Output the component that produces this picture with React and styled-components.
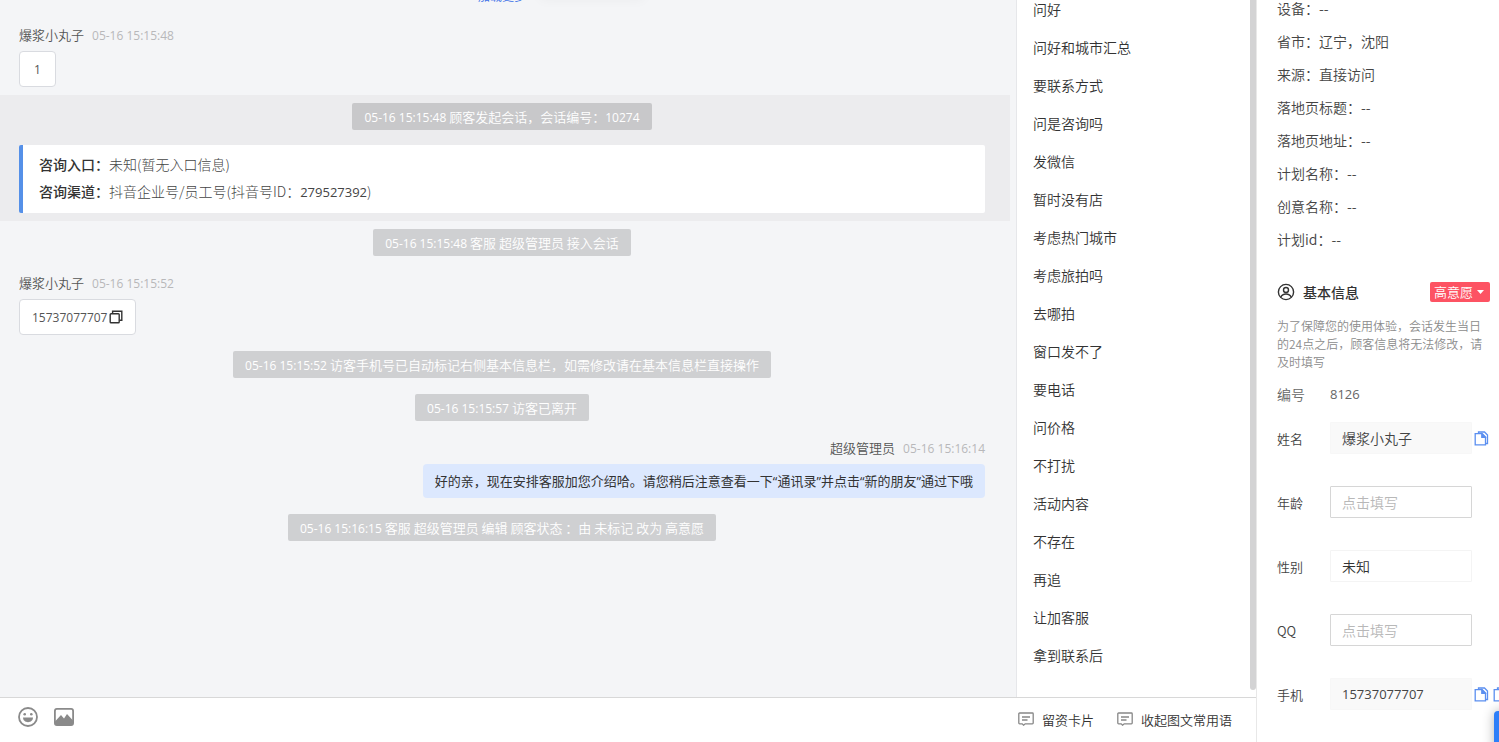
import React, { useState } from 'react';
import styled, { createGlobalStyle } from 'styled-components';

const cjk = '"Noto Sans CJK SC", sans-serif';
const latin = '"Open Sans", "Noto Sans CJK SC", sans-serif';

const GlobalStyle = createGlobalStyle`
  * {
    box-sizing: border-box;
  }
  body {
    margin: 0;
    font-family: ${cjk};
    font-size: 14px;
    font-weight: 350;
    color: #333;
    background: #fff;
  }
  button, input, select {
    font-family: inherit;
    font-weight: inherit;
    color: inherit;
  }
  button {
    border: 0;
    padding: 0;
    background: none;
    cursor: pointer;
  }
  svg {
    display: block;
    flex: none;
  }
`;

const Page = styled.div`
  position: relative;
  display: flex;
  height: 100vh;
  overflow: hidden;
`;

const Main = styled.main`
  flex: 1;
  min-width: 0;
  display: flex;
  flex-direction: column;
`;

const Workspace = styled.div`
  flex: 1;
  min-height: 0;
  display: flex;
`;

const Chat = styled.section`
  position: relative;
  flex: 1;
  min-width: 0;
  overflow: hidden;
  padding-right: 6px;
  background: #f4f5f7;
`;

const ToastShadow = styled.div`
  position: absolute;
  top: -20px;
  left: 540px;
  width: 104px;
  height: 18px;
  box-shadow: 0 2px 12px rgba(0, 0, 0, 0.04);
`;

const ChatLog = styled.div`
  display: flex;
  flex-direction: column;
  gap: 16px;
  margin-top: -14px;
`;

const Row = styled.div`
  display: flex;
  flex-direction: column;
  align-items: ${({ align }) => align || 'center'};
  padding: 0 25px 0 19px;
`;

const LoadMore = styled.button`
  height: 22px;
  font-size: 12px;
  line-height: 20px;
  padding-bottom: 2px;
  color: #3a6fe8;
`;

const Notice = styled.div`
  padding: 0 12px;
  border-radius: 2px;
  background: rgba(0, 0, 0, 0.15);
  font-size: 13px;
  line-height: 27px;
  height: 27px;
  color: #fff;
`;

const Num = styled.span`
  font-family: ${latin};
  font-size: ${({ size }) => size || 12}px;
  font-weight: 400;
`;

const MessageHead = styled.div`
  display: flex;
  align-items: baseline;
  gap: 8px;
  height: 22px;
  margin-bottom: 5px;
  font-size: 13px;
  line-height: 22px;
  color: #555;
`;

const Time = styled.time`
  font-family: ${latin};
  font-size: 12px;
  font-weight: 400;
  color: #b8b8ba;
`;

const Bubble = styled.div`
  display: flex;
  align-items: center;
  justify-content: center;
  gap: 2px;
  min-width: 37px;
  height: 36px;
  padding: 0 12px;
  border: 1px solid #d9dbe0;
  border-radius: 4px;
  background: #fff;
  color: #555;
`;

const OwnBubble = styled.div`
  padding: 0 12px;
  border-radius: 4px;
  background: #dce8fe;
  font-family: ${latin};
  font-size: 13px;
  font-weight: 400;
  line-height: 34px;
  height: 34px;
`;

const Session = styled.div`
  margin: -8px 0;
  padding: 8px 0;
  background: #ececee;
`;

const SourceCard = styled.dl`
  align-self: stretch;
  margin: 15px 0 0;
  padding: 6px 16px 8px;
  border-left: 4px solid #5590e8;
  border-radius: 2px;
  background: #fff;
  line-height: 27px;
`;

const SourceLine = styled.div`
  display: flex;
  height: 27px;

  dt {
    font-weight: 500;
  }
  dd {
    margin: 0;
    font-weight: 300;
    color: #444;
  }
`;

const Phrases = styled.section`
  flex: none;
  width: 240px;
  display: flex;
  border-left: 1px solid #e6e7ea;
  overflow: hidden;
`;

const PhraseList = styled.div`
  flex: 1;
  display: flex;
  flex-direction: column;
  gap: 20px;
`;

const Phrase = styled.button`
  flex: none;
  height: 18px;
  padding: 0 16px;
  font-size: 14px;
  line-height: 18px;
  text-align: left;
`;

const Scrollbar = styled.div`
  width: 6px;
  margin-bottom: 7px;
  border-radius: 0 0 3px 3px;
  background: #d3d3d4;
`;

const Composer = styled.footer`
  flex: none;
  height: 45px;
  display: flex;
  align-items: center;
  justify-content: space-between;
  padding: 0 24px 0 18px;
  border-top: 1px solid #d8d8d8;
`;

const Tools = styled.div`
  display: flex;
  gap: 16px;
  padding-bottom: 6px;
`;

const Actions = styled.div`
  display: flex;
  gap: 23px;
  padding-bottom: 2px;
`;

const Action = styled.button`
  display: flex;
  align-items: center;
  gap: 8px;
  font-size: 13px;
`;

const Aside = styled.aside`
  flex: none;
  width: 243px;
  padding: 0 9px 0 20px;
  border-left: 1px solid #e8e8e8;
  overflow: hidden;
`;

const Facts = styled.ul`
  display: flex;
  flex-direction: column;
  gap: 17px;
  list-style: none;
  margin: 0;
  padding: 0;
  color: #444;

  li {
    height: 16px;
    line-height: 16px;
  }
`;

const SectionHead = styled.div`
  display: flex;
  align-items: center;
  justify-content: space-between;
  height: 24px;
  margin-top: 33px;
`;

const SectionTitle = styled.h2`
  display: flex;
  align-items: center;
  gap: 8px;
  margin: 0;
  font-size: 14px;
  font-weight: 500;
`;

const Tag = styled.button`
  display: flex;
  align-items: center;
  gap: 4px;
  height: 20px;
  padding: 0 6px 0 4px;
  border-radius: 2px;
  background: #fd5363;
  font-size: 13px;
  line-height: 20px;
  color: #fff;
`;

const Hint = styled.p`
  margin: 13px 0 12px;
  font-size: 12px;
  line-height: 18px;
  color: #8c8c8c;
`;

const IdRow = styled.div`
  display: flex;
  height: 22px;
  line-height: 22px;
  color: #666;

  span:first-child {
    width: 53px;
  }
`;

const Form = styled.form`
  display: flex;
  flex-direction: column;
  gap: 32px;
  margin-top: 17px;
`;

const FieldRow = styled.div`
  display: flex;
  align-items: center;

  label {
    flex: none;
    width: 53px;
    font-size: 13px;
    color: #444;
  }
`;

const Input = styled.input`
  flex: none;
  width: 142px;
  height: 32px;
  padding: 0 11px;
  border: 1px solid ${({ readOnly }) => (readOnly ? '#f7f7f7' : '#d6d6d6')};
  border-radius: 1px;
  background: ${({ readOnly }) => (readOnly ? '#f9f9f9' : '#fff')};
  font-family: ${({ $numeric }) => ($numeric ? latin : cjk)};
  font-size: ${({ $numeric }) => ($numeric ? 13 : 14)}px;
  font-weight: ${({ $numeric }) => ($numeric ? 400 : 350)};
  color: #444;
  outline: none;

  &::placeholder {
    color: #b8b8b8;
    opacity: 1;
  }
`;

const Select = styled.select`
  width: 142px;
  height: 32px;
  padding: 0 11px;
  border: 1px solid #f4f4f4;
  border-radius: 1px;
  background: #fff;
  font-size: 14px;
  appearance: none;
  outline: none;
`;

const CopyButton = styled.button`
  flex: none;
  margin-left: 2px;

  & + & {
    margin-left: 4px;
  }
`;

const HelpTab = styled.button`
  position: absolute;
  right: -35px;
  bottom: -9px;
  width: 40px;
  height: 40px;
  border-radius: 4px;
  background: #2d7ff9;
  box-shadow: 0 0 12px rgba(0, 0, 0, 0.3);
`;

const CopyIcon = () => (
  <svg width="14" height="14" viewBox="0 0 14 14" fill="none" stroke="#333" strokeWidth="1.4">
    <rect x="1.2" y="3.7" width="9" height="9" rx="0.8" />
    <path d="M3.6 3.5V1.2h9.2v9.1h-2.4" />
  </svg>
);

const CopyPageIcon = () => (
  <svg width="15" height="15" viewBox="0 0 15 15" fill="none" stroke="#5b8ff0" strokeWidth="1.3">
    <path d="M4.5 2.6V1h6l3 3v8.5h-1.8" />
    <path d="M1.2 2.7h7l3.3 3.3v7.8H1.2z" />
    <path d="M7.8 2.9v3.4h3.4z" fill="#5b8ff0" />
  </svg>
);

const SmileIcon = () => (
  <svg width="20" height="20" viewBox="0 0 20 20" fill="none">
    <circle cx="10" cy="10" r="9" stroke="#8a8a8a" strokeWidth="1.8" />
    <circle cx="6.7" cy="7.2" r="1.3" fill="#8a8a8a" />
    <circle cx="13.3" cy="7.2" r="1.3" fill="#8a8a8a" />
    <path d="M5 10.6h10c0 2.8-2.2 4.6-5 4.6s-5-1.8-5-4.6z" fill="#8a8a8a" />
  </svg>
);

const ImageIcon = () => (
  <svg width="20" height="18" viewBox="0 0 20 18" fill="none">
    <rect x="0.9" y="0.9" width="18.2" height="16.2" rx="2" stroke="#8a8a8a" strokeWidth="1.8" />
    <path d="M1 13.5l6-6.5 3 3.5 3-4.5 6 6.5V17H1z" fill="#8a8a8a" />
  </svg>
);

const NoteIcon = () => (
  <svg width="16" height="14" viewBox="0 0 16 14" fill="none" stroke="#888" strokeWidth="1.3">
    <path d="M1.6 1h12.8a.8.8 0 0 1 .8.8v9.2a.8.8 0 0 1-.8.8H7.2L5.6 13.2 4.2 11.8H1.6a.8.8 0 0 1-.8-.8V1.8a.8.8 0 0 1 .8-.8z" />
    <path d="M4 5h8M4 8h5.5" />
  </svg>
);

const UserIcon = () => (
  <svg width="18" height="18" viewBox="0 0 18 18" fill="none" stroke="#333" strokeWidth="1.4">
    <circle cx="9" cy="9" r="7.6" />
    <circle cx="9" cy="7" r="2.5" />
    <path d="M3.8 14.2c1-2.3 2.9-3.2 5.2-3.2s4.2.9 5.2 3.2" />
  </svg>
);

const CaretIcon = () => (
  <svg width="7" height="4" viewBox="0 0 7 4">
    <path d="M0 0h7L3.5 4z" fill="#fff" />
  </svg>
);

const phrases = [
  '问好',
  '问好和城市汇总',
  '要联系方式',
  '问是咨询吗',
  '发微信',
  '暂时没有店',
  '考虑热门城市',
  '考虑旅拍吗',
  '去哪拍',
  '窗口发不了',
  '要电话',
  '问价格',
  '不打扰',
  '活动内容',
  '不存在',
  '再追',
  '让加客服',
  '拿到联系后',
];

const facts = [
  ['设备', '--'],
  ['省市', '辽宁，沈阳'],
  ['来源', '直接访问'],
  ['落地页标题', '--'],
  ['落地页地址', '--'],
  ['计划名称', '--'],
  ['创意名称', '--'],
  ['计划id', '--'],
];

const SystemNotice = ({ time, children }) => (
  <Notice>
    <Num>{time}</Num> {children}
  </Notice>
);

const App = () => {
  const [age, setAge] = useState('');
  const [qq, setQq] = useState('');

  return (
    <>
      <GlobalStyle />
      <Page>
        <Main>
          <Workspace>
            <Chat>
              <ToastShadow />
              <ChatLog>
                <Row>
                  <LoadMore>加载更多</LoadMore>
                </Row>

                <Row align="flex-start">
                  <MessageHead>
                    爆浆小丸子 <Time>05-16 15:15:48</Time>
                  </MessageHead>
                  <Bubble>
                    <Num>1</Num>
                  </Bubble>
                </Row>

                <Session>
                  <Row>
                    <SystemNotice time="05-16 15:15:48">
                      顾客发起会话，会话编号：<Num>10274</Num>
                    </SystemNotice>
                    <SourceCard>
                      <SourceLine>
                        <dt>咨询入口：</dt>
                        <dd>未知(暂无入口信息)</dd>
                      </SourceLine>
                      <SourceLine>
                        <dt>咨询渠道：</dt>
                        <dd>
                          抖音企业号/员工号(抖音号ID：<Num size={13}>279527392</Num>)
                        </dd>
                      </SourceLine>
                    </SourceCard>
                  </Row>
                </Session>

                <Row>
                  <SystemNotice time="05-16 15:15:48">客服 超级管理员 接入会话</SystemNotice>
                </Row>

                <Row align="flex-start">
                  <MessageHead>
                    爆浆小丸子 <Time>05-16 15:15:52</Time>
                  </MessageHead>
                  <Bubble>
                    <Num>15737077707</Num>
                    <button aria-label="复制">
                      <CopyIcon />
                    </button>
                  </Bubble>
                </Row>

                <Row>
                  <SystemNotice time="05-16 15:15:52">
                    访客手机号已自动标记右侧基本信息栏，如需修改请在基本信息栏直接操作
                  </SystemNotice>
                </Row>
                <Row>
                  <SystemNotice time="05-16 15:15:57">访客已离开</SystemNotice>
                </Row>

                <Row align="flex-end">
                  <MessageHead>
                    超级管理员 <Time>05-16 15:16:14</Time>
                  </MessageHead>
                  <OwnBubble>
                    好的亲，现在安排客服加您介绍哈。请您稍后注意查看一下“通讯录”并点击“新的朋友”通过下哦
                  </OwnBubble>
                </Row>

                <Row>
                  <SystemNotice time="05-16 15:16:15">
                    客服 超级管理员 编辑 顾客状态 ：由 未标记 改为 高意愿
                  </SystemNotice>
                </Row>
              </ChatLog>
            </Chat>

            <Phrases>
              <PhraseList>
                {phrases.map((text) => (
                  <Phrase key={text}>{text}</Phrase>
                ))}
              </PhraseList>
              <Scrollbar />
            </Phrases>
          </Workspace>

          <Composer>
            <Tools>
              <button aria-label="表情">
                <SmileIcon />
              </button>
              <button aria-label="图片">
                <ImageIcon />
              </button>
            </Tools>
            <Actions>
              <Action>
                <NoteIcon />
                留资卡片
              </Action>
              <Action>
                <NoteIcon />
                收起图文常用语
              </Action>
            </Actions>
          </Composer>
        </Main>

        <Aside>
          <Facts>
            {facts.map(([name, value]) => (
              <li key={name}>
                {name}：{value}
              </li>
            ))}
          </Facts>

          <SectionHead>
            <SectionTitle>
              <UserIcon />
              基本信息
            </SectionTitle>
            <Tag>
              高意愿
              <CaretIcon />
            </Tag>
          </SectionHead>
          <Hint>为了保障您的使用体验，会话发生当日的24点之后，顾客信息将无法修改，请及时填写</Hint>
          <IdRow>
            <span>编号</span>
            <Num size={13}>8126</Num>
          </IdRow>

          <Form>
            <FieldRow>
              <label htmlFor="name">姓名</label>
              <Input id="name" value="爆浆小丸子" readOnly />
              <CopyButton type="button" aria-label="复制姓名">
                <CopyPageIcon />
              </CopyButton>
            </FieldRow>
            <FieldRow>
              <label htmlFor="age">年龄</label>
              <Input
                id="age"
                placeholder="点击填写"
                value={age}
                onChange={(e) => setAge(e.target.value)}
              />
            </FieldRow>
            <FieldRow>
              <label htmlFor="gender">性别</label>
              <Select id="gender" defaultValue="未知">
                <option>未知</option>
                <option>男</option>
                <option>女</option>
              </Select>
            </FieldRow>
            <FieldRow>
              <label htmlFor="qq">QQ</label>
              <Input
                id="qq"
                placeholder="点击填写"
                value={qq}
                onChange={(e) => setQq(e.target.value)}
              />
            </FieldRow>
            <FieldRow>
              <label htmlFor="phone">手机</label>
              <Input id="phone" value="15737077707" $numeric readOnly />
              <CopyButton type="button" aria-label="复制手机">
                <CopyPageIcon />
              </CopyButton>
              <CopyButton type="button" aria-label="更多">
                <CopyPageIcon />
              </CopyButton>
            </FieldRow>
          </Form>
        </Aside>

        <HelpTab aria-label="帮助" />
      </Page>
    </>
  );
};

export default App;
